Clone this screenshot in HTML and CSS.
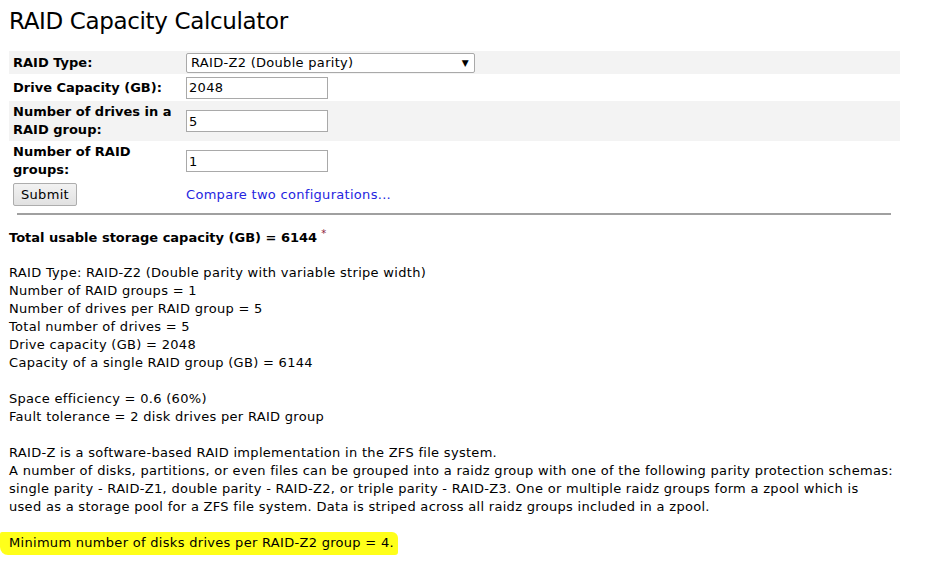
FILE: index.html
```html
<!DOCTYPE html>
<html lang="en">
  <head>
    <meta charset="UTF-8" />
    <meta name="viewport" content="width=device-width, initial-scale=1.0" />
    <title>RAID Capacity Calculator</title>
    <link rel="stylesheet" href="styles.css">
  </head>
  <body>
    <div class="page">
      <h1 class="title">RAID Capacity Calculator</h1>

      <form class="calc-form">
        <table class="calc-table">
          <tr class="row-shade">
            <td class="label">RAID Type:</td>
            <td class="field">
              <div class="select-wrap">
                <select class="raid-select">
                  <option>RAID-Z2 (Double parity)</option>
                </select>
                <span class="select-arrow">&#9660;</span>
              </div>
            </td>
          </tr>
          <tr class="row-short">
            <td class="label">Drive Capacity (GB):</td>
            <td class="field"><input class="num-input" type="text" value="2048"></td>
          </tr>
          <tr class="row-shade row-tall">
            <td class="label">Number of drives in a RAID group:</td>
            <td class="field"><input class="num-input" type="text" value="5"></td>
          </tr>
          <tr class="row-tall">
            <td class="label">Number of RAID groups:</td>
            <td class="field"><input class="num-input" type="text" value="1"></td>
          </tr>
          <tr class="row-short">
            <td class="label"><button type="button" class="submit-btn">Submit</button></td>
            <td class="field"><a class="compare-link" href="#">Compare two configurations...</a></td>
          </tr>
        </table>
      </form>

      <hr class="divider">

      <div class="results">
        <p class="total"><b>Total usable storage capacity (GB) = 6144</b> <sup class="star">*</sup></p>

        <p>
          RAID Type: RAID-Z2 (Double parity with variable stripe width)<br>
          Number of RAID groups = 1<br>
          Number of drives per RAID group = 5<br>
          Total number of drives = 5<br>
          Drive capacity (GB) = 2048<br>
          Capacity of a single RAID group (GB) = 6144
        </p>

        <p>
          Space efficiency = 0.6 (60%)<br>
          Fault tolerance = 2 disk drives per RAID group
        </p>

        <p>
          RAID-Z is a software-based RAID implementation in the ZFS file system.<br>
          A number of disks, partitions, or even files can be grouped into a raidz group with one of the following parity protection schemas: single parity - RAID-Z1, double parity - RAID-Z2, or triple parity - RAID-Z3. One or multiple raidz groups form a zpool which is used as a storage pool for a ZFS file system. Data is striped across all raidz groups included in a zpool.
        </p>

        <p class="min-note"><span class="marker">Minimum number of disks drives per RAID-Z2 group = 4.</span></p>
      </div>
    </div>
  </body>
</html>
```

FILE: styles.css
```css
body {
  margin: 0;
  background-color: #fff;
  color: #000;
  font-family: "DejaVu Sans", Verdana, sans-serif;
  font-size: 13px;
  line-height: 18px;
  letter-spacing: 0.3px;
}

.page {
  padding: 0 9px;
  width: 891px;
}

.title {
  font-size: 23px;
  font-weight: normal;
  line-height: 30px;
  letter-spacing: -0.35px;
  margin: 6px 0 15px 0;
}

/* 폼 테이블 */
.calc-table {
  width: 891px;
  border-collapse: collapse;
}

.calc-table td {
  padding: 0;
  vertical-align: middle;
}

.row-shade {
  background-color: #f3f3f3;
}

.calc-table tr {
  height: 23px;
}

.calc-table .row-short {
  height: 27px;
}

.calc-table .row-tall {
  height: 40px;
}

.label {
  width: 177px;
  padding-left: 4px !important;
  padding-right: 4px !important;
  box-sizing: border-box;
  font-weight: bold;
  letter-spacing: 0;
}

.select-wrap {
  position: relative;
  width: 289px;
}

.raid-select {
  appearance: none;
  -webkit-appearance: none;
  width: 289px;
  height: 20px;
  margin: 0;
  padding: 0 0 0 4px;
  border: 1px solid #a9a9a9;
  border-radius: 2px;
  background: #fff;
  font-family: inherit;
  font-size: 13px;
  letter-spacing: 0.3px;
  color: #000;
}

.select-arrow {
  position: absolute;
  right: 6px;
  top: 4px;
  font-size: 9px;
  line-height: 12px;
  pointer-events: none;
}

.num-input {
  width: 142px;
  height: 22px;
  margin: 0;
  padding: 1px 2px;
  box-sizing: border-box;
  border: 1px solid #a9a9a9;
  font-family: inherit;
  font-size: 13px;
  letter-spacing: 0.3px;
  color: #000;
}

.submit-btn {
  width: 64px;
  height: 23px;
  margin: 0;
  padding: 0;
  border: 1px solid #adadad;
  border-radius: 2px;
  background: linear-gradient(#f2f2f2, #e1e1e1);
  font-family: inherit;
  font-size: 13px;
  font-weight: normal;
  letter-spacing: 0.3px;
  color: #000;
}

.compare-link {
  color: #2525e0;
  text-decoration: none;
}

.divider {
  margin: 5px 9px 14px 8px;
  border: none;
  border-top: 2px solid #a0a0a0;
  height: 0;
}

.results {
  width: 885px;
}

.results p {
  margin: 0 0 18px 0;
}

.results .total {
  margin-bottom: 17px;
  letter-spacing: 0;
}

.star {
  color: #8b1a3a;
  font-size: 10px;
  line-height: 0;
}

.min-note {
  margin-left: -9px !important;
}

.marker {
  display: inline-block;
  background-color: #ffff1a;
  padding: 2px 4px 3px 9px;
  margin-top: -2px;
  border-radius: 2px 6px 3px 8px;
}
```
